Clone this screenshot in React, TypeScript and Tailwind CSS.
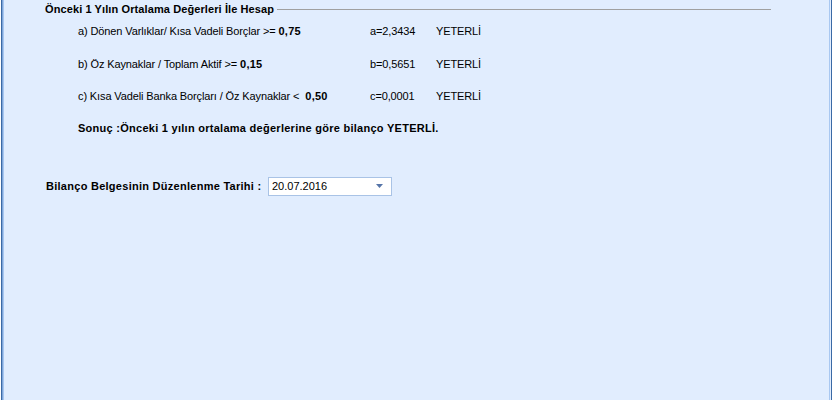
import React from 'react';

const font = { fontFamily: '"Liberation Sans", Tahoma, Arial, sans-serif' };

type Row = { label: React.ReactNode; value: string };

const rows: Row[] = [
  { label: <>a) Dönen Varlıklar/ Kısa Vadeli Borçlar &gt;= <b className="tracking-[0.25px]">0,75</b></>, value: 'a=2,3434' },
  { label: <>b) Öz Kaynaklar / Toplam Aktif &gt;= <b className="tracking-[0.25px]">0,15</b></>, value: 'b=0,5651' },
  { label: <>c) Kısa Vadeli Banka Borçları / Öz Kaynaklar &lt; &nbsp;<b className="tracking-[0.25px]">0,50</b></>, value: 'c=0,0001' },
];

export default function App() {
  return (
    <div className="w-[834px] h-[400px] bg-white pl-px pr-[2px] text-[11px] text-black" style={font}>
      <div className="h-full border-x border-[#3b6aa6] bg-[#e1edfe]">
        <div className="h-full border-l border-[#7fa5d8] pr-px">
          <div className="h-full border-x border-[#a9c8f1] bg-[#e1edfe] flex flex-col">
            {/* group header */}
            <div className="flex items-center h-[18px] pl-[41px] pr-[58px]">
              <span className="font-bold leading-none whitespace-nowrap tracking-[0.1px]">Önceki 1 Yılın Ortalama Değerleri İle Hesap</span>
              <div className="flex-1 ml-[3px] h-0 border-t border-[#a0a0a0]" />
            </div>

            <div className="flex flex-col pl-[74px] -mt-[3px]">
              {rows.map((r, i) => (
                <div key={i} className="flex items-center h-[32.5px] whitespace-nowrap tracking-[-0.12px]">
                  <div className="w-[292px]">{r.label}</div>
                  <div className="w-[66px]">{r.value}</div>
                  <div>YETERLİ</div>
                </div>
              ))}
              <div className="flex items-center h-[32px] font-bold whitespace-nowrap tracking-[0.27px]">
                Sonuç :Önceki 1 yılın ortalama değerlerine göre bilanço YETERLİ.
              </div>
            </div>

            <div className="flex items-center pl-[42px] mt-[32px]">
              <div className="w-[222px] font-bold whitespace-nowrap tracking-[0.27px]">Bilanço Belgesinin Düzenlenme Tarihi :</div>
              <div className="w-[124px] h-[19px] bg-white border border-[#a9c3e6] flex items-center pl-[3px] pr-[8px]">
                <span className="flex-1">20.07.2016</span>
                <svg width="7" height="4" viewBox="0 0 7 4">
                  <path d="M0 0h7L3.5 4z" fill="#5574a8" />
                </svg>
              </div>
            </div>
          </div>
        </div>
      </div>
    </div>
  );
}
